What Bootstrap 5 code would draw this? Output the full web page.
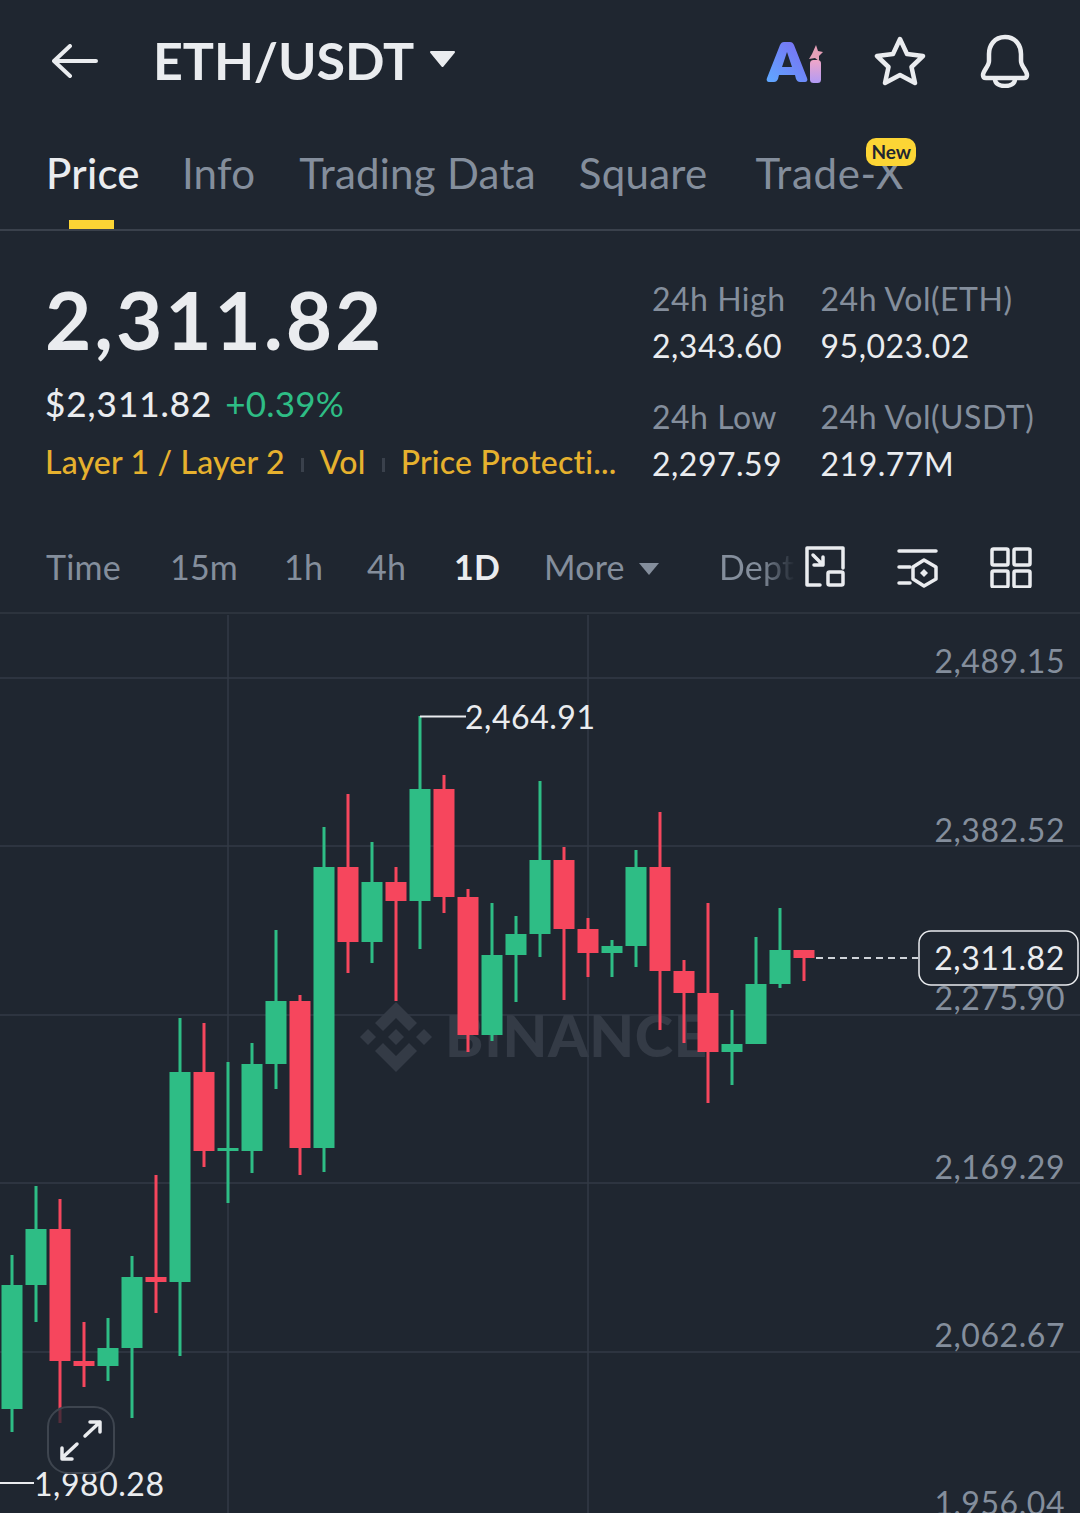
<!DOCTYPE html>
<html lang="en">
<head>
<meta charset="utf-8">
<title>ETH/USDT</title>
<link href="https://cdn.jsdelivr.net/npm/bootstrap@5.3.0/dist/css/bootstrap.min.css" rel="stylesheet">
<style>
html,body{margin:0;background:#1f2630;}
body{width:1080px;height:1513px;overflow:hidden;font-family:Lato,"Open Sans",sans-serif;color:#eaecef;}
.top-bar{height:122px;padding-left:52px;}
.back-ico{width:46px;height:34px;margin-right:55px;}
.pair-name{font-size:52px;font-weight:700;line-height:1;letter-spacing:-.1px;margin-top:-3px;}
.pair-caret{width:27px;height:18px;margin-left:15px;margin-top:-4px;}
.top-icons{margin-left:auto;margin-right:50px;gap:50px;}
.ai-ico{width:58px;height:46px;}
.star-ico{width:52px;height:50px;}
.bell-ico{width:50px;height:54px;margin-left:4px;}
.tab-strip{height:109px;padding-left:46px;gap:42px;border-bottom:2px solid #3a414c;font-size:42px;line-height:1;padding-top:30px;flex-wrap:nowrap;letter-spacing:.25px;}
.tab-item{position:relative;color:#848e9c;padding:0;white-space:nowrap;}
.tab-item.on{color:#eaecef;font-weight:500;}
.tab-item.on::after{content:"";position:absolute;left:23px;width:45px;height:9px;top:68px;background:#fcd535;}
.tab-item.nudge-a{margin-left:2px;}
.tab-item.nudge-b{margin-left:1px;}
.tab-item.nudge-c{margin-left:6px;letter-spacing:.7px;}
.new-pill{position:absolute;left:111px;top:-14px;background:#fcd535;color:#1f2630;font-size:19px;font-weight:700;line-height:28px;height:28px;padding:0 5px;border-radius:10px;letter-spacing:0;}
.stat-zone{height:283px;padding:0 0 0 46px;}
.stat-left{width:606px;padding-top:44px;}
.big-price{font-size:80px;font-weight:700;line-height:88px;letter-spacing:2.900px;margin-left:-1px;}
.sub-line{font-size:35px;line-height:40px;margin-top:20px;font-weight:500;letter-spacing:1px;margin-left:-1px;}
.up-txt{color:#2ebd85;font-weight:400;margin-left:3px;letter-spacing:.2px;}
.tag-line{font-size:32px;line-height:40px;margin-top:19px;color:#e6b12e;white-space:nowrap;font-weight:500;letter-spacing:.2px;margin-left:-1px;}
.tag-sep{display:inline-block;width:3px;height:14px;background:#3a414c;margin:0 16px;vertical-align:2px;}
.stat-cols{padding-top:46px;gap:35px;font-size:32px;line-height:44px;letter-spacing:.5px;}
.stat-col{display:flex;flex-direction:column;}
.stat-lbl{color:#848e9c;}
.stat-val{color:#eaecef;margin-top:3px;margin-bottom:27px;}
.range-bar{height:100px;padding-left:46px;padding-top:6px;font-size:34px;letter-spacing:.2px;border-bottom:2px solid #2c333d;position:relative;color:#848e9c;}
.range-item{white-space:nowrap;}
.range-item.w1{width:124px;}
.range-item.w2{width:114px;}
.range-item.w3{width:83px;}
.range-item.w4{width:87px;}
.range-item.w5{width:90px;color:#eaecef;font-weight:700;}
.range-item.w6{width:175px;}
.more-caret{width:22px;height:14px;margin-left:13px;vertical-align:4px;}
.depth-fade{width:76px;overflow:hidden;background:linear-gradient(90deg,#848e9c 55%,#1f2630 100%);-webkit-background-clip:text;background-clip:text;color:transparent;}
.range-icons{position:absolute;right:47px;top:32px;gap:50px;}
.chart-box{height:899px;}
.chart-box svg{display:block;width:1080px;height:899px;}
.axis-t{font-family:Lato,sans-serif;font-size:32px;fill:#848e9c;letter-spacing:.55px;}
.mark-t{font-family:Lato,sans-serif;font-size:32px;fill:#eaecef;letter-spacing:.55px;}
.gl{stroke:#333a45;stroke-width:1.5;}
.up rect{fill:#2ebd85;}
.dn rect{fill:#f6465d;}
</style>
</head>
<body>
<header class="top-bar d-flex align-items-center">
  <svg class="back-ico" viewBox="0 0 46 34" fill="none" stroke="#eaecef" stroke-width="4" stroke-linecap="round" stroke-linejoin="round"><path d="M2 17H44M18 2 2 17 18 32"/></svg>
  <span class="pair-name">ETH/USDT</span>
  <svg class="pair-caret" viewBox="0 0 27 18"><path d="M2 2H25L13.5 16Z" fill="#eaecef" stroke="#eaecef" stroke-width="2" stroke-linejoin="round"/></svg>
  <div class="top-icons d-flex align-items-center">
    <svg class="ai-ico" viewBox="0 0 58 46">
      <defs>
        <linearGradient id="aiA" x1="0" y1="1" x2="1" y2="0"><stop offset="0" stop-color="#5ea8ff"/><stop offset="1" stop-color="#7d6bf2"/></linearGradient>
        <linearGradient id="aiI" x1="0" y1="0" x2="0" y2="1"><stop offset="0" stop-color="#f0a6c8"/><stop offset="1" stop-color="#b19af5"/></linearGradient>
      </defs>
      <path fill-rule="evenodd" d="M3 44C1 44 0 42 1 40L14 7C15 5 16 4 18 4H24C26 4 27 5 28 7L41 40C42 42 41 44 39 44H34C32 44 31 43 30 41L29 37H13L12 41C11 43 10 44 8 44ZM16 29H26L21 14Z" fill="url(#aiA)"/>
      <rect x="44" y="22" width="11" height="23" rx="3.500" fill="url(#aiI)"/>
      <path d="M50 7 52 13 57 14 53 18 53 23 49 20 43 21 46 16Z" fill="#e6a0b8"/>
    </svg>
    <svg class="star-ico" viewBox="0 0 52 50" fill="none" stroke="#eaecef" stroke-width="4.500" stroke-linejoin="round"><path d="M26 3 33 18 49 20 37.500 31 41 47 26 39 11 47 14.500 31 3 20 19 18Z"/></svg>
    <svg class="bell-ico" viewBox="0 0 50 54" fill="none" stroke="#eaecef" stroke-width="4.500" stroke-linejoin="round" stroke-linecap="round"><path d="M25 3C14 3 9 12 9 20V27C9 32 3 37 3 41 3 43 4 44 6 44H44C46 44 47 43 47 41 47 37 41 32 41 27V20C41 12 36 3 25 3Z"/><path d="M15 45C15 50 20 52 25 52S35 50 35 45"/></svg>
  </div>
</header>

<nav class="nav tab-strip">
  <a class="nav-link tab-item on" href="#">Price</a>
  <a class="nav-link tab-item" href="#">Info</a>
  <a class="nav-link tab-item nudge-a" href="#">Trading Data</a>
  <a class="nav-link tab-item nudge-b" href="#">Square</a>
  <a class="nav-link tab-item nudge-c" href="#">Trade-X<span class="new-pill">New</span></a>
</nav>

<section class="stat-zone d-flex">
  <div class="stat-left">
    <div class="big-price">2,311.82</div>
    <div class="sub-line">$2,311.82 <span class="up-txt">+0.39%</span></div>
    <div class="tag-line">Layer 1 / Layer 2<span class="tag-sep"></span>Vol<span class="tag-sep"></span>Price Protecti...</div>
  </div>
  <div class="stat-cols d-flex">
    <div class="stat-col">
      <span class="stat-lbl">24h High</span><span class="stat-val">2,343.60</span>
      <span class="stat-lbl">24h Low</span><span class="stat-val">2,297.59</span>
    </div>
    <div class="stat-col">
      <span class="stat-lbl">24h Vol(ETH)</span><span class="stat-val">95,023.02</span>
      <span class="stat-lbl">24h Vol(USDT)</span><span class="stat-val">219.77M</span>
    </div>
  </div>
</section>

<div class="range-bar d-flex align-items-center">
  <span class="range-item w1">Time</span>
  <span class="range-item w2">15m</span>
  <span class="range-item w3">1h</span>
  <span class="range-item w4">4h</span>
  <span class="range-item w5">1D</span>
  <span class="range-item w6">More<svg class="more-caret" viewBox="0 0 22 14"><path d="M1 1H21L11 13Z" fill="#848e9c"/></svg></span>
  <span class="range-item depth-fade">Depth</span>
  <div class="range-icons d-flex align-items-start">
    <svg width="42" height="42" viewBox="0 0 42 42" fill="none" stroke="#eaecef" stroke-width="3.500" stroke-linecap="round" stroke-linejoin="round"><path d="M17 39H4V2H40V22"/><rect x="25" y="26" width="15" height="13" rx="1.500"/><path d="M10 9 20 19M20 11V19H11"/></svg>
    <svg width="44" height="42" viewBox="0 0 44 42" fill="none" stroke="#eaecef" stroke-width="3.500" stroke-linecap="round" stroke-linejoin="round"><path d="M4 5H41M4 21H15M4 37H15"/><path d="M29 14 41 21V33L29 40 18 33V21Z"/><path d="M29 23 33 27 29 31 25 27Z" fill="#eaecef" stroke="none"/></svg>
    <svg width="44" height="42" viewBox="0 0 44 42" fill="none" stroke="#eaecef" stroke-width="3.500" stroke-linejoin="round"><rect x="3" y="3" width="16" height="16" rx="1.500"/><rect x="25" y="3" width="16" height="16" rx="1.500"/><rect x="3" y="25" width="16" height="16" rx="1.500"/><rect x="25" y="25" width="16" height="16" rx="1.500"/></svg>
  </div>
</div>

<div class="chart-box">
<svg viewBox="0 614 1080 899">
  <path class="gl" d="M0 678H1080M0 846H1080M0 1015H1080M0 1183H1080M0 1352H1080M228 615V1513M588 615V1513"/>
  <g fill="#343b46">
    <path d="M396 1002 417 1023 409 1031 396 1018 383 1031 375 1023ZM396 1072 417 1051 409 1043 396 1056 383 1043 375 1051ZM396 1029 404 1037 396 1045 388 1037ZM368 1029 376 1037 368 1045 360 1037ZM424 1029 432 1037 424 1045 416 1037Z"/>
    <text x="445" y="1057" font-family="Lato,sans-serif" font-size="58" font-weight="900" textLength="262">BINANCE</text>
  </g>
  <g class="up"><rect x="10.500" y="1255" width="3" height="177"/><rect x="1.500" y="1285" width="21" height="124"/></g>
  <g class="up"><rect x="34.500" y="1186" width="3" height="136"/><rect x="25.500" y="1229" width="21" height="56"/></g>
  <g class="dn"><rect x="58.500" y="1199" width="3" height="224"/><rect x="49.500" y="1229" width="21" height="132"/></g>
  <g class="dn"><rect x="82.500" y="1322" width="3" height="65"/><rect x="73.500" y="1361" width="21" height="5"/></g>
  <g class="up"><rect x="106.500" y="1318" width="3" height="63"/><rect x="97.500" y="1348" width="21" height="18"/></g>
  <g class="up"><rect x="130.500" y="1256" width="3" height="162"/><rect x="121.500" y="1277" width="21" height="71"/></g>
  <g class="dn"><rect x="154.500" y="1175" width="3" height="138"/><rect x="145.500" y="1277" width="21" height="5"/></g>
  <g class="up"><rect x="178.500" y="1018" width="3" height="338"/><rect x="169.500" y="1072" width="21" height="210"/></g>
  <g class="dn"><rect x="202.500" y="1023" width="3" height="144"/><rect x="193.500" y="1072" width="21" height="79"/></g>
  <g class="up"><rect x="226.500" y="1062" width="3" height="141"/><rect x="217.500" y="1148" width="21" height="3"/></g>
  <g class="up"><rect x="250.500" y="1043" width="3" height="130"/><rect x="241.500" y="1064" width="21" height="87"/></g>
  <g class="up"><rect x="274.500" y="930" width="3" height="159"/><rect x="265.500" y="1001" width="21" height="63"/></g>
  <g class="dn"><rect x="298.500" y="995" width="3" height="180"/><rect x="289.500" y="1001" width="21" height="147"/></g>
  <g class="up"><rect x="322.500" y="827" width="3" height="345"/><rect x="313.500" y="867" width="21" height="281"/></g>
  <g class="dn"><rect x="346.500" y="794" width="3" height="179"/><rect x="337.500" y="867" width="21" height="75"/></g>
  <g class="up"><rect x="370.500" y="842" width="3" height="121"/><rect x="361.500" y="882" width="21" height="60"/></g>
  <g class="dn"><rect x="394.500" y="867" width="3" height="134"/><rect x="385.500" y="882" width="21" height="19"/></g>
  <g class="up"><rect x="418.500" y="716" width="3" height="233"/><rect x="409.500" y="789" width="21" height="112"/></g>
  <g class="dn"><rect x="442.500" y="775" width="3" height="138"/><rect x="433.500" y="789" width="21" height="108"/></g>
  <g class="dn"><rect x="466.500" y="889" width="3" height="163"/><rect x="457.500" y="897" width="21" height="138"/></g>
  <g class="up"><rect x="490.500" y="903" width="3" height="138"/><rect x="481.500" y="955" width="21" height="80"/></g>
  <g class="up"><rect x="514.500" y="916" width="3" height="86"/><rect x="505.500" y="934" width="21" height="21"/></g>
  <g class="up"><rect x="538.500" y="781" width="3" height="176"/><rect x="529.500" y="860" width="21" height="74"/></g>
  <g class="dn"><rect x="562.500" y="847" width="3" height="153"/><rect x="553.500" y="860" width="21" height="69"/></g>
  <g class="dn"><rect x="586.500" y="918" width="3" height="59"/><rect x="577.500" y="929" width="21" height="24"/></g>
  <g class="up"><rect x="610.500" y="940" width="3" height="37"/><rect x="601.500" y="946" width="21" height="7"/></g>
  <g class="up"><rect x="634.500" y="850" width="3" height="117"/><rect x="625.500" y="867" width="21" height="79"/></g>
  <g class="dn"><rect x="658.500" y="812" width="3" height="218"/><rect x="649.500" y="867" width="21" height="104"/></g>
  <g class="dn"><rect x="682.500" y="960" width="3" height="83"/><rect x="673.500" y="971" width="21" height="22"/></g>
  <g class="dn"><rect x="706.500" y="903" width="3" height="200"/><rect x="697.500" y="993" width="21" height="59"/></g>
  <g class="up"><rect x="730.500" y="1010" width="3" height="75"/><rect x="721.500" y="1044" width="21" height="8"/></g>
  <g class="up"><rect x="754.500" y="937" width="3" height="107"/><rect x="745.500" y="984" width="21" height="60"/></g>
  <g class="up"><rect x="778.500" y="908" width="3" height="80"/><rect x="769.500" y="950" width="21" height="34"/></g>
  <g class="dn"><rect x="802.500" y="950" width="3" height="31"/><rect x="793.500" y="950" width="21" height="8"/></g>

  <path d="M420 716.500H466M0 1483H34" stroke="#eaecef" stroke-width="2" fill="none"/>
  <text class="mark-t" x="465" y="729">2,464.91</text>
  <text class="mark-t" x="34" y="1496">1,980.28</text>

  <text class="axis-t" x="1065" y="673" text-anchor="end">2,489.15</text>
  <text class="axis-t" x="1065" y="842" text-anchor="end">2,382.52</text>
  <text class="axis-t" x="1065" y="1010" text-anchor="end">2,275.90</text>
  <text class="axis-t" x="1065" y="1179" text-anchor="end">2,169.29</text>
  <text class="axis-t" x="1065" y="1347" text-anchor="end">2,062.67</text>
  <text class="axis-t" x="1065" y="1515" text-anchor="end">1,956.04</text>

  <path d="M816 958H918" stroke="#cfd3d9" stroke-width="2" stroke-dasharray="7 5"/>
  <rect x="919" y="931" width="159" height="54" rx="12" fill="#1f2630" stroke="#eaecef" stroke-width="1.500"/>
  <text class="mark-t" x="999.500" y="970" text-anchor="middle">2,311.82</text>

  <rect x="48" y="1407" width="66" height="66" rx="20" fill="#1f2630" fill-opacity=".75" stroke="#3e454f" stroke-width="2"/>
  <path d="M85 1436 100 1422M90 1422H100V1432M77 1444 62 1458M62 1448V1459H72" fill="none" stroke="#eaecef" stroke-width="3.500" stroke-linecap="round" stroke-linejoin="round"/>
</svg>
</div>
<script src="https://cdn.jsdelivr.net/npm/bootstrap@5.3.0/dist/js/bootstrap.bundle.min.js"></script>
</body>
</html>
